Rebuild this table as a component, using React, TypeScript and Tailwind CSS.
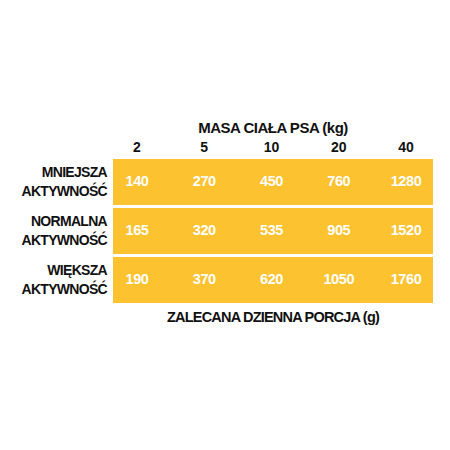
const WEIGHTS = ['2', '5', '10', '20', '40'];

const ROWS = [
  { label: 'MNIEJSZA', values: ['140', '270', '450', '760', '1280'] },
  { label: 'NORMALNA', values: ['165', '320', '535', '905', '1520'] },
  { label: 'WIĘKSZA', values: ['190', '370', '620', '1050', '1760'] },
];

export default function App() {
  return (
    <div className="w-[450px] h-[450px] bg-white text-[#111] font-['Liberation_Sans',Arial,sans-serif]">
      <div className="pt-[118px] flex flex-col">
        {/* heading */}
        <div className="flex">
          <div className="w-[113px] shrink-0" />
          <div className="w-[320px] flex flex-col">
            <h2 className="text-center text-[15px] font-bold leading-[19px] tracking-[-0.5px]">MASA CIAŁA PSA (kg)</h2>
            <div className="flex justify-between pl-[4px] pr-[7px] mt-[1px]">
              {WEIGHTS.map(w => (
                <span key={w} className="w-[40px] text-center text-[14px] font-bold leading-[18px]">{w}</span>
              ))}
            </div>
          </div>
        </div>

        {/* rows */}
        <div className="flex flex-col gap-[3px] mt-[3px]">
          {ROWS.map(row => (
            <div key={row.label} className="flex items-center">
              <div className="w-[113px] shrink-0 pr-[6px] text-right text-[14px] font-bold leading-[19px] tracking-[-0.7px]">
                <p>{row.label}</p>
                <p>AKTYWNOŚĆ</p>
              </div>
              <div className="w-[320px] h-[46px] bg-[#fcc22f] flex items-center justify-between pl-[4px] pr-[7px]">
                {row.values.map((v, i) => (
                  <span key={i} className="w-[40px] text-center text-white text-[14.5px] font-bold tracking-[-0.4px]">{v}</span>
                ))}
              </div>
            </div>
          ))}
        </div>

        {/* footer */}
        <div className="flex mt-[5px]">
          <div className="w-[113px] shrink-0" />
          <p className="w-[320px] text-center text-[14.5px] font-bold leading-[19px] tracking-[-0.8px]">ZALECANA DZIENNA PORCJA (g)</p>
        </div>
      </div>
    </div>
  );
}
